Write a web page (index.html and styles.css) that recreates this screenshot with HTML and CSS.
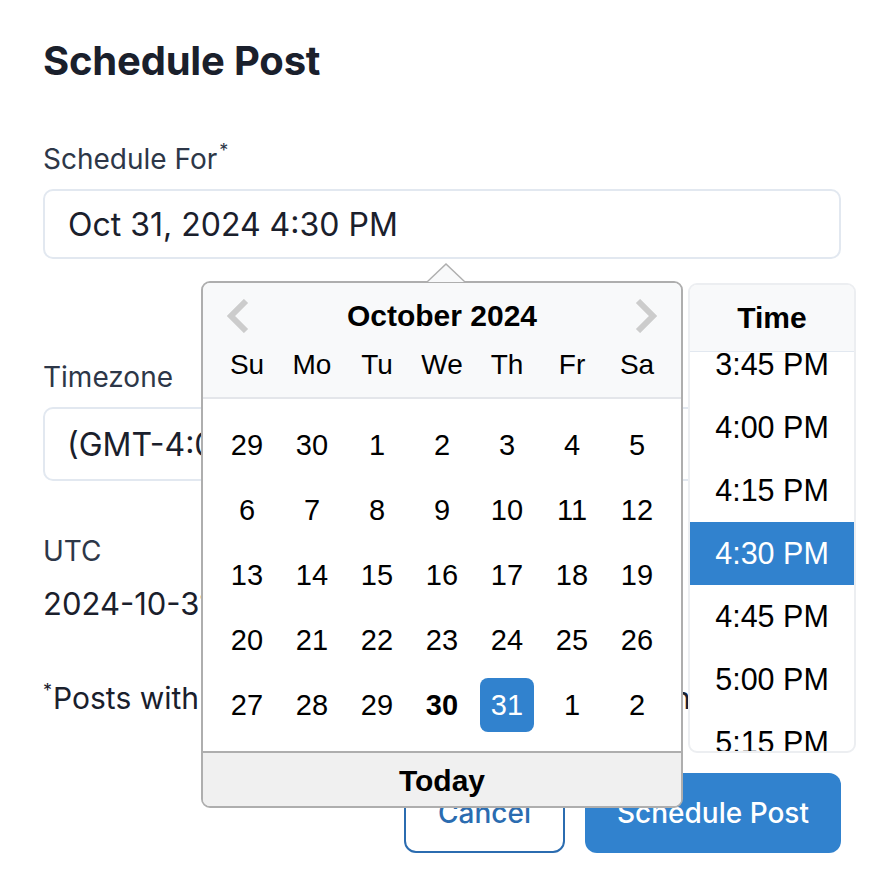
FILE: index.html
```html
<!DOCTYPE html>
<html lang="en">
<head>
<meta charset="utf-8">
<title>Schedule Post</title>
<link rel="stylesheet" href="styles.css">
</head>
<body>
<div class="page">
  <h1 class="title">Schedule Post</h1>

  <div class="group group-first">
    <label class="label">Schedule For<sup class="req">*</sup></label>
    <div class="field">
      <div class="input">Oct 31, 2024 4:30 PM</div>

      <div class="popper">
        <div class="arrow"></div>
        <div class="calendar">
          <div class="cal-header">
            <div class="nav-row">
              <svg class="chev" width="22" height="34" viewBox="0 0 22 34"><polyline points="19,2 4,17 19,32" fill="none" stroke="#cccccc" stroke-width="6" stroke-linejoin="miter"/></svg>
              <div class="month-title">October 2024</div>
              <svg class="chev" width="22" height="34" viewBox="0 0 22 34"><polyline points="3,2 18,17 3,32" fill="none" stroke="#cccccc" stroke-width="6" stroke-linejoin="miter"/></svg>
            </div>
            <div class="day-names">
              <span>Su</span><span>Mo</span><span>Tu</span><span>We</span><span>Th</span><span>Fr</span><span>Sa</span>
            </div>
          </div>
          <div class="month">
            <div class="week"><span class="day">29</span><span class="day">30</span><span class="day">1</span><span class="day">2</span><span class="day">3</span><span class="day">4</span><span class="day">5</span></div>
            <div class="week"><span class="day">6</span><span class="day">7</span><span class="day">8</span><span class="day">9</span><span class="day">10</span><span class="day">11</span><span class="day">12</span></div>
            <div class="week"><span class="day">13</span><span class="day">14</span><span class="day">15</span><span class="day">16</span><span class="day">17</span><span class="day">18</span><span class="day">19</span></div>
            <div class="week"><span class="day">20</span><span class="day">21</span><span class="day">22</span><span class="day">23</span><span class="day">24</span><span class="day">25</span><span class="day">26</span></div>
            <div class="week"><span class="day">27</span><span class="day">28</span><span class="day">29</span><span class="day today">30</span><span class="day selected">31</span><span class="day">1</span><span class="day">2</span></div>
          </div>
          <div class="cal-footer">Today</div>
        </div>

        <div class="time-box">
          <div class="time-header">Time</div>
          <div class="time-list">
            <ul class="time-items">
              <li>3:45 PM</li>
              <li>4:00 PM</li>
              <li>4:15 PM</li>
              <li class="selected">4:30 PM</li>
              <li>4:45 PM</li>
              <li>5:00 PM</li>
              <li>5:15 PM</li>
              <li>5:30 PM</li>
            </ul>
          </div>
        </div>
      </div>
    </div>
  </div>

  <div class="group group-tz">
    <label class="label">Timezone</label>
    <div class="select">(GMT-4:00) Eastern Time (US &amp; Canada)</div>
  </div>

  <div class="group group-utc">
    <div class="label">UTC</div>
    <div class="utc-value">2024-10-31 20:30:00 UTC</div>
  </div>

  <p class="note"><sup class="req">*</sup>Posts with a past date will be published upon creation</p>

  <div class="actions">
    <button class="btn btn-outline">Cancel</button>
    <button class="btn btn-primary">Schedule Post</button>
  </div>
</div>
</body>
</html>
```

FILE: styles.css
```css
* { box-sizing: border-box; }

html, body {
  margin: 0;
  padding: 0;
  background: #ffffff;
}

body {
  font-family: "Inter", "Liberation Sans", sans-serif;
  color: #1a202c;
}

.page {
  padding: 37px 41px 0 43px;
}

.title {
  margin: 0;
  font-size: 40px;
  line-height: 48px;
  font-weight: 700;
  color: #1a202c;
  letter-spacing: -0.2px;
}

.group-first {
  margin-top: 56px;
}

.label {
  display: block;
  font-size: 28px;
  line-height: 36px;
  font-weight: 400;
  color: #2d3748;
}

.req {
  font-size: 18px;
  line-height: 0;
  vertical-align: 12px;
  margin-left: 2px;
}

.field {
  position: relative;
  margin-top: 12px;
}

.input {
  height: 70px;
  border: 2px solid #e2e8f0;
  border-radius: 10px;
  padding-left: 23px;
  display: flex;
  align-items: center;
  font-size: 32px;
  color: #1a202c;
}

.group-tz {
  margin-top: 100px;
}

.select {
  margin-top: 12px;
  height: 74px;
  border: 2px solid #e2e8f0;
  border-radius: 10px;
  padding-left: 22px;
  display: flex;
  align-items: center;
  font-size: 32px;
  color: #1a202c;
  white-space: nowrap;
  overflow: hidden;
}

.group-utc {
  margin-top: 52px;
}

.utc-value {
  margin-top: 16px;
  font-size: 31px;
  line-height: 38px;
  color: #1a202c;
}

.note {
  margin: 56px 0 0 0;
  font-size: 30px;
  line-height: 38px;
  color: #1a202c;
  white-space: nowrap;
}

.note .req {
  margin-left: 0;
  margin-right: 1px;
}

.actions {
  margin-top: 56px;
  display: flex;
  justify-content: flex-end;
  gap: 20px;
}

.btn {
  height: 80px;
  border-radius: 12px;
  font-family: "Inter", "Liberation Sans", sans-serif;
  font-size: 28px;
  font-weight: 500;
  padding: 0 32px;
  cursor: pointer;
}

.btn-outline {
  width: 161px;
  background: #ffffff;
  border: 2px solid #2b6cb0;
  color: #2b6cb0;
}

.btn-primary {
  width: 256px;
  background: #3182ce;
  border: none;
  color: #ffffff;
}

/* ---------- date picker popper ---------- */

.popper {
  position: absolute;
  left: 158px;
  top: calc(100% + 22px);
  display: flex;
  align-items: flex-start;
  z-index: 10;
  font-family: "Liberation Sans", "Helvetica Neue", Arial, sans-serif;
  color: #000;
}

.arrow {
  position: absolute;
  left: 225px;
  top: -18px;
  width: 0;
  height: 0;
  border-left: 20px solid transparent;
  border-right: 20px solid transparent;
  border-bottom: 19px solid #aeaeae;
}

.arrow::after {
  content: "";
  position: absolute;
  left: -18px;
  top: 2px;
  border-left: 18px solid transparent;
  border-right: 18px solid transparent;
  border-bottom: 17px solid #f8f9fa;
}

.calendar {
  width: 482px;
  height: 527px;
  border: 2px solid #aeaeae;
  border-radius: 9px;
  background: #ffffff;
  overflow: hidden;
  display: flex;
  flex-direction: column;
}

.cal-header {
  height: 116px;
  background: #f8f9fa;
  border-bottom: 2px solid #e4e6ea;
  padding-top: 15px;
}

.nav-row {
  height: 36px;
  padding: 0 24px;
  display: flex;
  align-items: center;
  justify-content: space-between;
}

.chev {
  display: block;
}

.month-title {
  font-size: 30px;
  line-height: 36px;
  font-weight: 700;
}

.day-names {
  margin-top: 13px;
  padding: 0 11.5px;
  display: flex;
}

.day-names span {
  width: 65px;
  text-align: center;
  font-size: 28px;
  line-height: 36px;
}

.month {
  padding: 13.5px 11.5px;
  flex: 1;
}

.week {
  display: flex;
  height: 65px;
  align-items: center;
}

.day {
  width: 54px;
  height: 54px;
  margin: 0 5.5px;
  border-radius: 8px;
  display: flex;
  align-items: center;
  justify-content: center;
  font-size: 29px;
}

.day.today {
  font-weight: 700;
}

.day.selected {
  background: #3182ce;
  color: #ffffff;
}

.cal-footer {
  height: 55px;
  border-top: 2px solid #aeaeae;
  background: #f0f0f0;
  display: flex;
  align-items: center;
  justify-content: center;
  font-size: 30px;
  font-weight: 700;
  padding-top: 2px;
}

.time-box {
  margin-left: 5px;
  margin-top: 2px;
  width: 168px;
  height: 470px;
  border: 2px solid #eceef1;
  border-radius: 9px;
  background: #ffffff;
  overflow: hidden;
  display: flex;
  flex-direction: column;
}

.time-header {
  height: 67px;
  flex: none;
  background: #f8f9fa;
  border-bottom: 1px solid #e2e8f0;
  display: flex;
  align-items: center;
  justify-content: center;
  font-size: 30px;
  font-weight: 700;
}

.time-list {
  flex: 1;
  overflow: hidden;
}

.time-items {
  list-style: none;
  margin: -19.5px 0 0 0;
  padding: 0;
}

.time-items li {
  height: 63px;
  display: flex;
  align-items: center;
  justify-content: center;
  font-size: 30.5px;
  white-space: nowrap;
}

.time-items li.selected {
  background: #3182ce;
  color: #ffffff;
}
```
